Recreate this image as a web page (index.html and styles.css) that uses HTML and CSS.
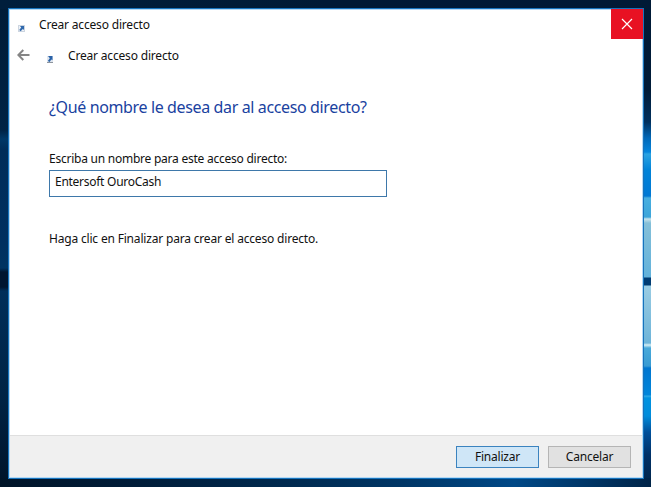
FILE: index.html
```
<!DOCTYPE html>
<html lang="es">
  <head>
    <meta charset="UTF-8" />
    <meta name="viewport" content="width=device-width, initial-scale=1.0" />
    <title>Crear acceso directo</title>
    <link rel="stylesheet" href="styles.css">
  </head>
  <body>
    <div class="desktop">
      <form class="dialog">
        <div class="titlebar">
          <svg class="shortcut-icon" width="7" height="7" viewBox="0 0 7 7">
            <rect x="0.5" y="0.5" width="6" height="6" fill="#eef2f7" stroke="#ccd5e0" />
            <path d="M2 1h4v4L4.8 3.9 2.7 6.2 1.2 5 3.2 2.5z" fill="#3169ad" />
          </svg>
          <span class="title">Crear acceso directo</span>
          <button class="close" type="button" aria-label="Cerrar">
            <svg width="12" height="12" viewBox="0 0 12 12">
              <path d="M1 1l10 10M11 1L1 11" stroke="#fff" stroke-width="1.2" />
            </svg>
          </button>
        </div>
        <div class="header">
          <svg class="back" width="13" height="12" viewBox="0 0 13 12">
            <path d="M12.5 6H1.5M6.3 1L1.3 6l5 5" fill="none" stroke="#858585" stroke-width="2" />
          </svg>
          <svg class="shortcut-icon" width="6" height="7" viewBox="0 0 6 7">
            <rect width="6" height="7" fill="#dfe6ef" />
            <path d="M1 0h4.5v4.3L4.3 3.4 2.6 6 0.8 5 2.8 2.2z" fill="#2a62a8" />
            <path d="M0 6.5h6" stroke="#8d949d" />
          </svg>
          <span class="title">Crear acceso directo</span>
        </div>
        <div class="content">
          <h1>¿Qué nombre le desea dar al acceso directo?</h1>
          <label for="shortcutName">Escriba un nombre para este acceso directo:</label>
          <input type="text" id="shortcutName" name="shortcutName" value="Entersoft OuroCash" />
          <p>Haga clic en Finalizar para crear el acceso directo.</p>
        </div>
        <div class="footer">
          <button class="btn primary" type="submit">Finalizar</button>
          <button class="btn" type="button">Cancelar</button>
        </div>
      </form>
    </div>
  </body>
</html>
```

FILE: styles.css
```
* {
  box-sizing: border-box;
}
body {
  margin: 0;
  font-family: "Noto Sans", "Open Sans", sans-serif;
  font-size: 12px;
  line-height: 16px;
  color: #111;
}
.desktop {
  width: 651px;
  height: 487px;
  padding: 8px 7px 8px 8px;
  background:
    linear-gradient(90deg, #001428, #001c38 20%, #002a50 45%, #003666 62%, #004886 79%, #003667 90%, #002448) left bottom / 651px 9px no-repeat,
    linear-gradient(#001a36 0, #001b38 90px, #00305e 122px, #0068b8 138px, #0585dc 152px, #2ba3e2 154px, #0083d8 170px, #0078d4 196px, #48afe0 198px, #3ca5da 217px, #c8e4ec 219px, #85c0d9 223px, #62b2db 277px, #003b72 278px, #003b72 285px, #9acce3 286px, #6db4d9 343px, #d6eff5 345px, #48a9da 348px, #389bd3 366px, #0076d0 368px, #0086da 395px, #30aae5 396px, #0092e0 398px, #008cdb 416px, #00509b 432px, #003167 455px, #012448 487px) right top / 8px 487px no-repeat,
    linear-gradient(90deg, #001e3c, #001a35 50%, #001a36) left top / 651px 9px no-repeat,
    linear-gradient(#001b36 0, #002345 130px, #003867 139px, #002d59 150px, #003060 240px, #003461 268px, #001530 272px, #001530 287px, #002e5a 291px, #002344 400px, #001329 487px) left top / 9px 487px no-repeat,
    #001a36;
}
.dialog {
  height: 471px;
  display: flex;
  flex-direction: column;
  border: 1px solid #1673bd;
  background-color: #fff;
  box-shadow: inset 0 0 0 1px #b5d9f4;
}
.titlebar {
  height: 31px;
  display: flex;
  align-items: flex-start;
  padding-left: 9px;
}
.titlebar .shortcut-icon {
  margin-top: 16px;
  margin-right: 14px;
}
.title {
  font-size: 12px;
  letter-spacing: -0.18px;
}
.titlebar .title {
  margin-top: 8px;
}
.close {
  width: 32px;
  height: 30px;
  margin-left: auto;
  padding: 0;
  display: flex;
  align-items: center;
  justify-content: center;
  border: none;
  background-color: #e81123;
}
.header {
  height: 32px;
  display: flex;
  align-items: flex-start;
  padding-left: 8px;
}
.header .back {
  margin-top: 9px;
  margin-right: 17px;
}
.header .shortcut-icon {
  margin-top: 16px;
  margin-right: 15px;
}
.header .title {
  margin-top: 8px;
}
.content {
  flex: 1;
  display: flex;
  flex-direction: column;
  align-items: flex-start;
  padding: 24px 40px 0;
}
h1 {
  margin: 0 0 33px;
  font-size: 16px;
  font-weight: normal;
  line-height: 22px;
  letter-spacing: -0.37px;
  color: #1a429f;
}
label {
  letter-spacing: -0.24px;
}
input {
  width: 338px;
  height: 27px;
  margin-top: 3px;
  padding: 0 5px 4px;
  border: 1px solid #3e78aa;
  background-color: #fff;
  font: inherit;
  letter-spacing: -0.27px;
  color: #111;
}
p {
  margin: 34px 0 0;
  letter-spacing: -0.18px;
}
.footer {
  height: 42px;
  margin: 0 1px 1px;
  padding: 10px 11px 0 0;
  display: flex;
  justify-content: flex-end;
  gap: 9px;
  border-top: 1px solid #dfdfdf;
  background-color: #f0f0f0;
}
.btn {
  width: 83px;
  height: 22px;
  padding: 0;
  border: 1px solid #b5b5b5;
  background-color: #e1e1e1;
  font: inherit;
  letter-spacing: -0.2px;
  color: #111;
}
.btn.primary {
  border-color: #3b83bf;
  background-color: #cfe6f7;
}
```
